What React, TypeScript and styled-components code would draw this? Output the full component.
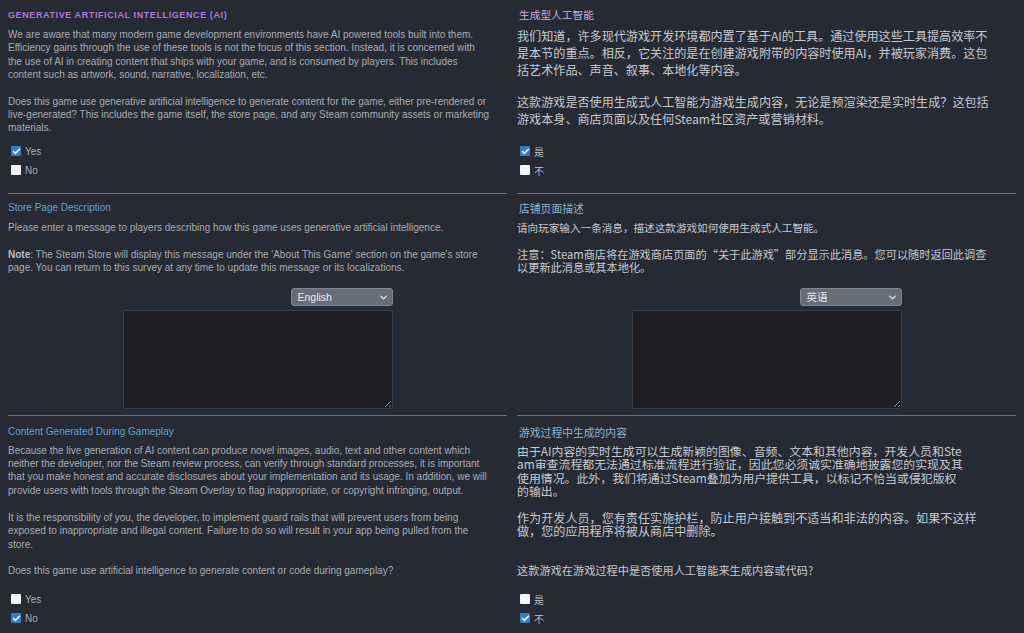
import React from 'react';
import styled, { createGlobalStyle, css } from 'styled-components';
import { Check, ChevronDown } from 'lucide-react';

type Lang = 'en' | 'zh';

const GlobalStyle = createGlobalStyle`
  html, body {
    margin: 0;
    background: #262a32;
  }
  body {
    font-family: 'Liberation Sans', Arial, 'Noto Sans CJK SC', sans-serif;
    -webkit-font-smoothing: antialiased;
  }
`;

const Page = styled.div`
  display: grid;
  grid-template-columns: 1fr 1fr;
  column-gap: 10px;
  align-items: start;
  align-content: start;
  padding: 8px 8px 0;
  height: 633px;
  box-sizing: border-box;
  overflow: hidden;
`;

const zhFont = css`
  font-family: 'Noto Sans CJK SC', 'Liberation Sans', sans-serif;
`;

const Cell = styled.div<{ $gap: number }>`
  margin-top: ${(p) => p.$gap}px;
  min-width: 0;
`;

const Title = styled.div<{ $lang: Lang }>`
  line-height: 14px;
  ${(p) =>
    p.$lang === 'en'
      ? css`
          font-size: 9px;
          font-weight: 700;
          letter-spacing: 0.6px;
          text-transform: uppercase;
          color: #b574df;
        `
      : css`
          ${zhFont};
          font-size: 10.7px;
          padding-left: 2px;
          color: #c6a9e6;
        `}
`;

const Heading = styled.div<{ $lang: Lang }>`
  line-height: 14px;
  ${(p) =>
    p.$lang === 'en'
      ? css`
          font-size: 10px;
          color: #5ba3d9;
        `
      : css`
          ${zhFont};
          font-size: 10.8px;
          padding-left: 2px;
          color: #8cb6d0;
        `}
`;

const Text = styled.p<{ $lang: Lang; $size: number; $lh: number }>`
  margin: 0;
  white-space: pre-line;
  font-size: ${(p) => p.$size}px;
  line-height: ${(p) => p.$lh}px;
  color: ${(p) => (p.$lang === 'en' ? '#a8adb4' : '#c6cbd1')};
  ${(p) => p.$lang === 'zh' && zhFont};

  b {
    font-weight: 700;
    color: #b9bec4;
  }
`;

const Divider = styled.hr`
  margin: 0;
  border: 0;
  height: 1px;
  background: #697079;
`;

const Options = styled.div`
  display: flex;
  flex-direction: column;
  padding-left: 3px;
`;

const Option = styled.label<{ $lang: Lang }>`
  display: flex;
  align-items: center;
  gap: 4px;
  height: 19px;
  font-size: 10px;
  color: ${(p) => (p.$lang === 'en' ? '#a8adb4' : '#b9bec4')};
  ${(p) => p.$lang === 'zh' && zhFont};
`;

const Box = styled.span<{ $checked: boolean }>`
  display: inline-flex;
  align-items: center;
  justify-content: center;
  width: 10px;
  height: 10px;
  box-sizing: border-box;
  border-radius: 1px;
  background: ${(p) => (p.$checked ? '#2e80cf' : '#f3f4f5')};
  color: #ffffff;
`;

const Editor = styled.div`
  display: flex;
  flex-direction: column;
  gap: 4px;
  width: 270px;
  margin: 0 auto;
`;

const Select = styled.div<{ $lang: Lang }>`
  position: relative;
  align-self: flex-end;
  width: 102px;
  height: 18px;
  box-sizing: border-box;
  padding-left: 6px;
  border: 1px solid #80868f;
  border-radius: 3px;
  background: #676d77;
  color: #e8eaed;
  font-size: 10.5px;
  line-height: 16px;
  ${(p) => p.$lang === 'zh' && zhFont};
`;

const Chevron = styled(ChevronDown)`
  position: absolute;
  right: 3px;
  top: 3px;
  color: #e8eaed;
`;

const Area = styled.textarea`
  display: block;
  width: 100%;
  height: 99px;
  box-sizing: border-box;
  margin: 0;
  border: 1px solid #393d45;
  border-radius: 2px;
  background: #1f1e23;
  color: #c3c8ce;
  resize: vertical;
  outline: none;
`;

type Pair<T> = { en: T; zh: T };

type Block =
  | { kind: 'title'; gap: Pair<number>; text: Pair<string> }
  | { kind: 'heading'; gap: Pair<number>; text: Pair<string> }
  | {
      kind: 'text';
      gap: Pair<number>;
      size: Pair<number>;
      lh: Pair<number>;
      text: Pair<React.ReactNode>;
    }
  | { kind: 'options'; gap: Pair<number>; checked: number }
  | { kind: 'divider'; gap: Pair<number> }
  | { kind: 'editor'; gap: Pair<number> };

const both = (n: number): Pair<number> => ({ en: n, zh: n });

const optionLabels: Pair<string[]> = {
  en: ['Yes', 'No'],
  zh: ['是', '不'],
};

const languageNames: Pair<string> = { en: 'English', zh: '英语' };

const blocks: Block[] = [
  {
    kind: 'title',
    gap: both(0),
    text: { en: 'Generative Artificial Intelligence (AI)', zh: '生成型人工智能' },
  },
  {
    kind: 'text',
    gap: { en: 6, zh: 5 },
    size: { en: 10, zh: 12.1 },
    lh: { en: 13.4, zh: 17 },
    text: {
      en: 'We are aware that many modern game development environments have AI powered tools built into them.\nEfficiency gains through the use of these tools is not the focus of this section. Instead, it is concerned with\nthe use of AI in creating content that ships with your game, and is consumed by players. This includes\ncontent such as artwork, sound, narrative, localization, etc.',
      zh: '我们知道，许多现代游戏开发环境都内置了基于AI的工具。通过使用这些工具提高效率不\n是本节的重点。相反，它关注的是在创建游戏附带的内容时使用AI，并被玩家消费。这包\n括艺术作品、声音、叙事、本地化等内容。',
    },
  },
  {
    kind: 'text',
    gap: { en: 13, zh: 11 },
    size: { en: 10, zh: 12.1 },
    lh: { en: 13.4, zh: 17 },
    text: {
      en: 'Does this game use generative artificial intelligence to generate content for the game, either pre-rendered or\nlive-generated? This includes the game itself, the store page, and any Steam community assets or marketing\nmaterials.',
      zh: '这款游戏是否使用生成式人工智能为游戏生成内容，无论是预渲染还是实时生成？这包括\n游戏本身、商店页面以及任何Steam社区资产或营销材料。',
    },
  },
  { kind: 'options', gap: both(7), checked: 0 },
  { kind: 'divider', gap: both(13) },
  {
    kind: 'heading',
    gap: both(7),
    text: { en: 'Store Page Description', zh: '店铺页面描述' },
  },
  {
    kind: 'text',
    gap: both(6),
    size: { en: 10, zh: 10.6 },
    lh: both(13.4),
    text: {
      en: 'Please enter a message to players describing how this game uses generative artificial intelligence.',
      zh: '请向玩家输入一条消息，描述这款游戏如何使用生成式人工智能。',
    },
  },
  {
    kind: 'text',
    gap: both(13.6),
    size: { en: 10, zh: 11.2 },
    lh: { en: 13.4, zh: 13 },
    text: {
      en: (
        <>
          <b>Note</b>: The Steam Store will display this message under the 'About This Game' section on the game's
          store{'\n'}page. You can return to this survey at any time to update this message or its localizations.
        </>
      ),
      zh: '注意：Steam商店将在游戏商店页面的“关于此游戏”部分显示此消息。您可以随时返回此调查\n以更新此消息或其本地化。',
    },
  },
  { kind: 'editor', gap: both(13) },
  { kind: 'divider', gap: both(6.5) },
  {
    kind: 'heading',
    gap: both(8.4),
    text: { en: 'Content Generated During Gameplay', zh: '游戏过程中生成的内容' },
  },
  {
    kind: 'text',
    gap: both(5),
    size: { en: 10, zh: 11.9 },
    lh: { en: 13.4, zh: 13.6 },
    text: {
      en: 'Because the live generation of AI content can produce novel images, audio, text and other content which\nneither the developer, nor the Steam review process, can verify through standard processes, it is important\nthat you make honest and accurate disclosures about your implementation and its usage. In addition, we will\nprovide users with tools through the Steam Overlay to flag inappropriate, or copyright infringing, output.',
      zh: '由于AI内容的实时生成可以生成新颖的图像、音频、文本和其他内容，开发人员和Ste\nam审查流程都无法通过标准流程进行验证，因此您必须诚实准确地披露您的实现及其\n使用情况。此外，我们将通过Steam叠加为用户提供工具，以标记不恰当或侵犯版权\n的输出。',
    },
  },
  {
    kind: 'text',
    gap: both(13),
    size: { en: 10, zh: 12.1 },
    lh: { en: 13.4, zh: 13 },
    text: {
      en: 'It is the responsibility of you, the developer, to implement guard rails that will prevent users from being\nexposed to inappropriate and illegal content. Failure to do so will result in your app being pulled from the\nstore.',
      zh: '作为开发人员，您有责任实施护栏，防止用户接触到不适当和非法的内容。如果不这样\n做，您的应用程序将被从商店中删除。',
    },
  },
  {
    kind: 'text',
    gap: both(12.4),
    size: { en: 10, zh: 11.2 },
    lh: both(13.4),
    text: {
      en: 'Does this game use artificial intelligence to generate content or code during gameplay?',
      zh: '这款游戏在游戏过程中是否使用人工智能来生成内容或代码?',
    },
  },
  { kind: 'options', gap: both(13), checked: 1 },
];

const renderBlock = (block: Block, lang: Lang) => {
  switch (block.kind) {
    case 'title':
      return <Title $lang={lang}>{block.text[lang]}</Title>;
    case 'heading':
      return <Heading $lang={lang}>{block.text[lang]}</Heading>;
    case 'text':
      return (
        <Text $lang={lang} $size={block.size[lang]} $lh={block.lh[lang]}>
          {block.text[lang]}
        </Text>
      );
    case 'options':
      return (
        <Options>
          {optionLabels[lang].map((label, idx) => (
            <Option key={label} $lang={lang}>
              <Box $checked={idx === block.checked}>
                {idx === block.checked && <Check size={9} strokeWidth={4} />}
              </Box>
              {label}
            </Option>
          ))}
        </Options>
      );
    case 'divider':
      return <Divider />;
    case 'editor':
      return (
        <Editor>
          <Select $lang={lang}>
            {languageNames[lang]}
            <Chevron size={11} strokeWidth={3} />
          </Select>
          <Area />
        </Editor>
      );
  }
};

export default function App() {
  return (
    <>
      <GlobalStyle />
      <Page>
        {blocks.map((block, idx) =>
          (['en', 'zh'] as Lang[]).map((lang) => (
            <Cell key={`${idx}-${lang}`} $gap={block.gap[lang]}>
              {renderBlock(block, lang)}
            </Cell>
          ))
        )}
      </Page>
    </>
  );
}
